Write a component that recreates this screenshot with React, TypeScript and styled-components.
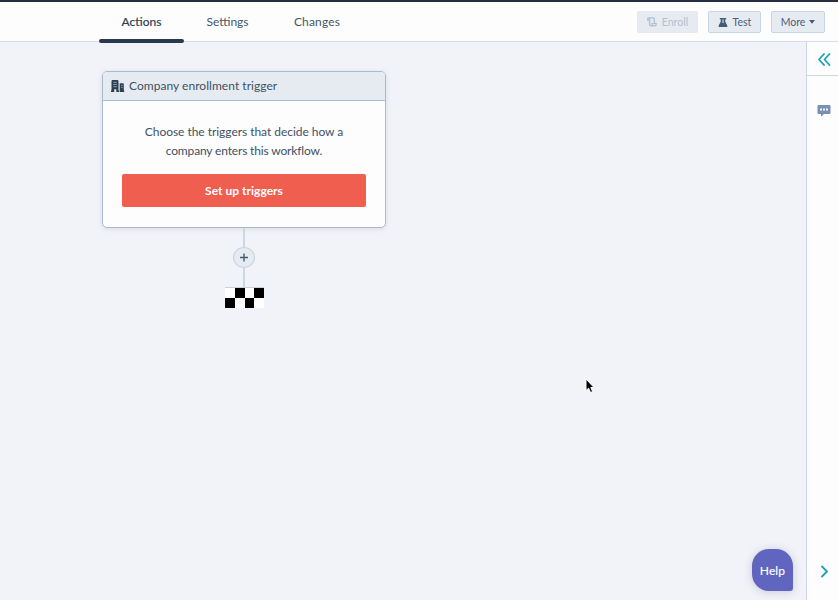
import React from "react";
import styled, { createGlobalStyle } from "styled-components";

const GlobalStyle = createGlobalStyle`
  * { box-sizing: border-box; }
  body { margin: 0; overflow: hidden; font-family: Lato, "Open Sans", sans-serif; color: #405164; }
  button { font: inherit; color: inherit; border: 0; margin: 0; padding: 0; background: none; white-space: nowrap; }
  svg { display: block; flex: none; }
`;

const Page = styled.div`
  width: 838px;
  height: 600px;
  display: flex;
  flex-direction: column;
  background: #f2f3f8;
  overflow: hidden;
`;

const Header = styled.header`
  height: 42px;
  flex: none;
  display: flex;
  justify-content: space-between;
  border-top: 2px solid #232d3e;
  border-bottom: 1px solid #d5deea;
  background: #fdfdfe;
`;

const Tabs = styled.nav`
  display: flex;
  height: 41px;
  padding-left: 99px;
`;

const Tab = styled.button<{ $width: number; $active?: boolean; $spacing: number }>`
  width: ${(p) => p.$width}px;
  height: 41px;
  display: flex;
  flex-direction: column;
  align-items: center;
  font-size: 12px;
  line-height: 39px;
  letter-spacing: ${(p) => p.$spacing}px;
  color: ${(p) => (p.$active ? "#2d3e50" : "#455668")};
  -webkit-text-stroke: ${(p) => (p.$active ? "0.2px #2d3e50" : "0")};

  &::after {
    content: "";
    width: 85px;
    height: 4px;
    margin-top: -2px;
    flex: none;
    border-radius: 2px;
    background: ${(p) => (p.$active ? "#2a3950" : "transparent")};
  }
`;

const TabLabel = styled.span`
  height: 39px;
`;

const Actions = styled.div`
  display: flex;
  gap: 10px;
  padding: 9px 13px 0 0;
`;

const ToolButton = styled.button<{ $width: number; $disabled?: boolean; $gap: number }>`
  width: ${(p) => p.$width}px;
  height: 22px;
  display: flex;
  align-items: center;
  justify-content: center;
  gap: ${(p) => p.$gap}px;
  font-size: 10.5px;
  line-height: 20px;
  letter-spacing: 0;
  border: 1px solid ${(p) => (p.$disabled ? "#e5eaf0" : "#c7d4e2")};
  border-radius: 2px;
  background: #e6ebf1;
  color: ${(p) => (p.$disabled ? "#b0c0d1" : "#4c6078")};
`;

const Body = styled.div`
  flex: 1;
  display: flex;
  min-height: 0;
`;

const Canvas = styled.main`
  flex: 1;
  position: relative;
  padding: 29px 0 0 102px;
`;

const Flow = styled.div`
  width: 284px;
  display: flex;
  flex-direction: column;
  align-items: center;
`;

const Card = styled.section`
  width: 284px;
  height: 157px;
  border: 1.5px solid #a8bacb;
  border-radius: 5px;
  background: #fdfdfe;
  box-shadow: 0 1px 5px rgba(60, 80, 120, 0.14);
  overflow: hidden;
`;

const CardHeader = styled.div`
  height: 29px;
  display: flex;
  align-items: center;
  gap: 4px;
  padding-left: 8px;
  background: #e6ebf1;
  border-bottom: 1px solid #a8bfd1;
  font-size: 12px;
  line-height: 28px;
  letter-spacing: 0.04px;
`;

const CardBody = styled.div`
  padding: 21px 19px 0;
  text-align: center;
`;

const Line = styled.div<{ $spacing: number }>`
  font-size: 12px;
  line-height: 19px;
  letter-spacing: ${(p) => p.$spacing}px;
`;

const PrimaryButton = styled.button`
  width: 244px;
  height: 33px;
  margin-top: 14px;
  border-radius: 2px;
  background: #f05e50;
  color: #fff;
  font-size: 12px;
  font-weight: 700;
  letter-spacing: 0.02px;
`;

const Connector = styled.div<{ $height: number }>`
  width: 2px;
  height: ${(p) => p.$height}px;
  background: #cdd7e2;
`;

const AddStep = styled.button`
  width: 22px;
  height: 21px;
  display: grid;
  place-items: center;
  border: 1px solid #c6d2df;
  border-radius: 50%;
  background: #e6ebf2;
`;

const Checker = styled.div`
  width: 39px;
  height: 21px;
  display: grid;
  grid-template-columns: 10px 10px 9px 10px;
  grid-template-rows: 10px 10px;
  margin-left: 1px;
  border-top: 1px solid #c5d1dd;
`;

const Square = styled.i<{ $dark: boolean }>`
  background: ${(p) => (p.$dark ? "#000" : "#fff")};
`;

const HelpButton = styled.button`
  position: absolute;
  right: 13px;
  bottom: 9px;
  width: 41px;
  height: 42px;
  border-radius: 17px 17px 3px 17px;
  background: #6065bf;
  color: #fff;
  font-size: 12px;
  letter-spacing: 0.15px;
  -webkit-text-stroke: 0.15px #fff;
  box-shadow: 0 1px 9px rgba(50, 60, 110, 0.22);
`;

const Pointer = styled.svg`
  position: absolute;
  left: 585px;
  top: 336px;
`;

const SidePanel = styled.aside`
  width: 32px;
  flex: none;
  display: flex;
  flex-direction: column;
  align-items: center;
  border-left: 1.5px solid #ccd7e5;
  background: #fdfdfe;
`;

const PanelToggle = styled.button`
  width: 100%;
  height: 34px;
  display: grid;
  place-items: center;
  padding: 1px 0 0 3px;
  border-bottom: 1px solid #cbd6e2;
`;

const PanelButton = styled.button<{ $bottom?: boolean }>`
  padding-left: 3px;
  margin-top: ${(p) => (p.$bottom ? "auto" : "29px")};
  margin-bottom: ${(p) => (p.$bottom ? "22px" : "0")};
`;

const EnrollIcon = () => (
  <svg width="10" height="10" viewBox="0 0 10 10" fill="none" stroke="#b0c0d1" strokeWidth="1.3">
    <path d="M2.6 3H.7V1.8Q.7 .9 1.6 .9H6.2Q7.3 .9 7.3 2V6M2.6 1V7.7Q2.6 8.8 3.8 8.8H8.2Q9.3 8.8 9.3 7V6.6H5V8.5" />
  </svg>
);

const FlaskIcon = () => (
  <svg width="10" height="9" viewBox="0 0 10 9" fill="#425b76">
    <path d="M1.8 0H8.2V1.2H7.3V3.8L9.3 7.4V9H.7V7.4L2.7 3.8V1.2H1.8Z" />
    <path d="M4.1 1.2H5.9V4.2L6.4 5H3.6L4.1 4.2Z" fill="#9aabbd" />
  </svg>
);

const BuildingIcon = () => (
  <svg width="14" height="12" viewBox="0 0 14 12">
    <path d="M1.5 0H6.2Q7.5 0 7.5 1.4V10.5H8V12H5.3V9.2H3.2V12H0V10.5H.5V1.2Q.5 0 1.5 0ZM8.7 3.3H12Q12.8 3.3 12.8 4.2V10.5H13.2V12H8.7Z" fill="#2d3e50" />
    <path d="M2.2 2.3H5.8M2.2 4.5H5.8M2.2 6.7H5.8M10 5.3H11.6M10 7.3H11.6" stroke="#a7b4c1" strokeWidth=".8" />
  </svg>
);

const PlusIcon = () => (
  <svg width="8" height="9" viewBox="0 0 8 9" stroke="#425b76" strokeWidth="1.4">
    <path d="M4 .5V8.5M0 4.5H8" />
  </svg>
);

const CollapseIcon = () => (
  <svg width="13" height="13" viewBox="0 0 13 13" fill="none" stroke="#18a4b4" strokeWidth="1.8" strokeLinecap="round" strokeLinejoin="round">
    <path d="M6 1L1 6.5L6 12M11.5 1L6.5 6.5L11.5 12" />
  </svg>
);

const CommentIcon = () => (
  <svg width="14" height="12" viewBox="0 0 14 12">
    <path d="M1.5 0H12.5Q13.5 0 13.5 1V8Q13.5 9 12.5 9H7L4 11.8V9H1.5Q.5 9 .5 8V1Q.5 0 1.5 0Z" fill="#7890b2" />
    <path d="M3 3.5H5V5.5H3ZM6 3.5H8V5.5H6ZM9 3.5H11V5.5H9Z" fill="#f0f4f8" />
  </svg>
);

const ExpandIcon = () => (
  <svg width="7" height="13" viewBox="0 0 7 13" fill="none" stroke="#18a4b4" strokeWidth="1.8" strokeLinecap="round" strokeLinejoin="round">
    <path d="M1 1.5L6 6.5L1 11.5" />
  </svg>
);

const checks = [false, true, false, true, true, false, true, false];

export default function App() {
  return (
    <Page>
      <GlobalStyle />
      <Header>
        <Tabs>
          <Tab $width={85} $spacing={0} $active><TabLabel>Actions</TabLabel></Tab>
          <Tab $width={87} $spacing={0}><TabLabel>Settings</TabLabel></Tab>
          <Tab $width={92} $spacing={0.15}><TabLabel>Changes</TabLabel></Tab>
        </Tabs>
        <Actions>
          <ToolButton $width={61} $gap={5} $disabled><EnrollIcon />Enroll</ToolButton>
          <ToolButton $width={53} $gap={5}><FlaskIcon />Test</ToolButton>
          <ToolButton $width={54} $gap={4}>
            More
            <svg width="6" height="4" viewBox="0 0 6 4"><path d="M0 0H6L3 3.7Z" fill="#425b76" /></svg>
          </ToolButton>
        </Actions>
      </Header>
      <Body>
        <Canvas>
          <Flow>
            <Card>
              <CardHeader><BuildingIcon />Company enrollment trigger</CardHeader>
              <CardBody>
                <Line $spacing={-0.04}>Choose the triggers that decide how a</Line>
                <Line $spacing={-0.15}>company enters this workflow.</Line>
                <PrimaryButton>Set up triggers</PrimaryButton>
              </CardBody>
            </Card>
            <Connector $height={19} />
            <AddStep><PlusIcon /></AddStep>
            <Connector $height={19} />
            <Checker>{checks.map((dark, i) => <Square key={i} $dark={dark} />)}</Checker>
          </Flow>
          <Pointer width="10" height="16" viewBox="0 0 10 16">
            <path d="M1 1V12.5L3.6 10.2L5.5 14.5L7.6 13.5L5.8 9.5H9Z" fill="#000" stroke="#fff" strokeWidth="1" />
          </Pointer>
          <HelpButton>Help</HelpButton>
        </Canvas>
        <SidePanel>
          <PanelToggle><CollapseIcon /></PanelToggle>
          <PanelButton><CommentIcon /></PanelButton>
          <PanelButton $bottom><ExpandIcon /></PanelButton>
        </SidePanel>
      </Body>
    </Page>
  );
}
